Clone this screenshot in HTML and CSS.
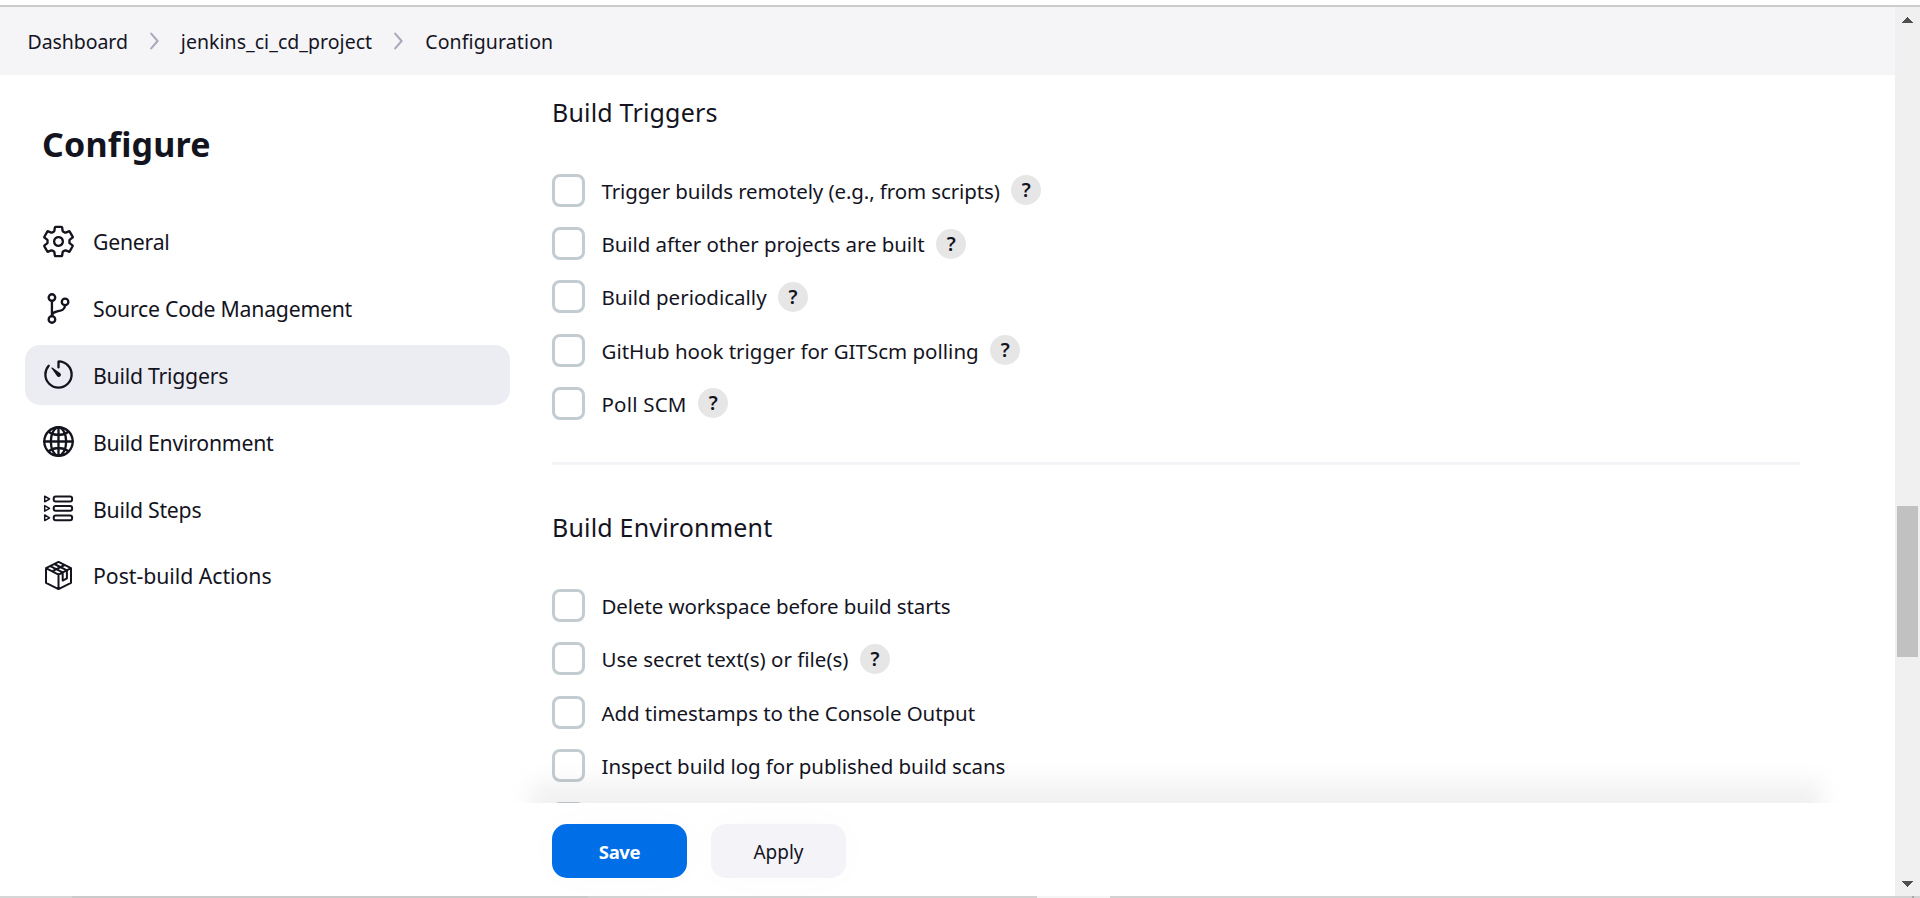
FILE: index.html
```html
<!DOCTYPE html>
<html lang="en">
<head>
<meta charset="utf-8">
<title>jenkins_ci_cd_project Config [Jenkins]</title>
<link rel="stylesheet" href="styles.css">
</head>
<body>
<div class="viewport">
  <div class="page">
    <nav class="breadcrumbs">
      <span>Dashboard</span>
      <svg class="chevron" viewBox="0 0 9 18"><path d="M1.2 1.6 7.6 9l-6.4 7.4"/></svg>
      <span class="project">jenkins_ci_cd_project</span>
      <svg class="chevron" viewBox="0 0 9 18"><path d="M1.2 1.6 7.6 9l-6.4 7.4"/></svg>
      <span class="loose">Configuration</span>
    </nav>
    <div class="work">
      <aside class="sidebar">
        <h1>Configure</h1>
        <ul class="tasks">
          <li class="task">
            <svg class="icon" viewBox="0 0 512 512"><path d="M262.29 192.31a64 64 0 1057.4 57.4 64.13 64.13 0 00-57.4-57.4zM416.39 256a154.34 154.34 0 01-1.53 20.79l45.21 35.46a10.81 10.81 0 012.45 13.75l-42.77 74a10.81 10.81 0 01-13.14 4.59l-44.9-18.08a16.11 16.11 0 00-15.17 1.75A164.48 164.48 0 01325 400.8a15.94 15.94 0 00-8.82 12.14l-6.73 47.89a11.08 11.08 0 01-10.68 9.17h-85.54a11.11 11.11 0 01-10.69-8.87l-6.72-47.82a16.07 16.07 0 00-9-12.22 155.3 155.3 0 01-21.46-12.57 16 16 0 00-15.11-1.71l-44.89 18.07a10.81 10.81 0 01-13.14-4.58l-42.77-74a10.8 10.8 0 012.45-13.75l38.21-30a16.05 16.05 0 006-14.08c-.36-4.17-.58-8.33-.58-12.5s.21-8.27.58-12.35a16 16 0 00-6.07-13.94l-38.19-30A10.81 10.81 0 0149.48 186l42.77-74a10.81 10.81 0 0113.14-4.59l44.9 18.08a16.11 16.11 0 0015.17-1.75A164.48 164.48 0 01187 111.2a15.94 15.94 0 008.82-12.14l6.73-47.89A11.08 11.08 0 01213.23 42h85.54a11.11 11.11 0 0110.69 8.87l6.72 47.82a16.07 16.07 0 009 12.22 155.3 155.3 0 0121.46 12.57 16 16 0 0015.11 1.71l44.89-18.07a10.81 10.81 0 0113.14 4.58l42.77 74a10.8 10.8 0 01-2.45 13.75l-38.21 30a16.05 16.05 0 00-6.05 14.08c.33 4.14.55 8.3.55 12.47z"/></svg>
            <span>General</span>
          </li>
          <li class="task">
            <svg class="icon" viewBox="0 0 512 512"><circle cx="160" cy="96" r="48"/><circle cx="160" cy="416" r="48"/><path d="M160 368V144"/><circle cx="352" cy="160" r="48"/><path d="M352 208c0 128-192 48-192 160"/></svg>
            <span>Source Code Management</span>
          </li>
          <li class="task active">
            <svg class="icon" viewBox="0 0 512 512"><path d="M112.91 128A191.85 191.85 0 0064 254c-1.18 106.35 85.65 193.8 192 194 106.2.2 192-85.83 192-192 0-104.54-83.55-189.61-187.5-192a4.36 4.36 0 00-4.5 4.37V152"/><path class="solid" d="M233.38 278.63l-79-113a8.13 8.13 0 0111.32-11.32l113 79a32.5 32.5 0 01-37.25 53.26 33.21 33.21 0 01-8.07-7.94z"/></svg>
            <span>Build Triggers</span>
          </li>
          <li class="task">
            <svg class="icon" viewBox="0 0 512 512"><path d="M256 48C141.13 48 48 141.13 48 256s93.13 208 208 208 208-93.13 208-208S370.87 48 256 48z"/><path d="M256 48c-58.07 0-112.67 93.13-112.67 208S197.93 464 256 464s112.67-93.13 112.67-208S314.07 48 256 48z"/><path d="M117.33 117.33c38.24 27.15 86.38 43.34 138.67 43.34s100.43-16.19 138.67-43.34M394.67 394.67c-38.24-27.15-86.38-43.34-138.67-43.34s-100.43 16.19-138.67 43.34M256 48v416M464 256H48"/></svg>
            <span>Build Environment</span>
          </li>
          <li class="task">
            <svg class="icon fine" viewBox="0 0 35 35"><rect x="12.7" y="5.6" width="18.4" height="4.8" rx="2"/><rect x="12.7" y="15" width="18.4" height="4.8" rx="2"/><rect x="12.7" y="24.4" width="18.4" height="4.8" rx="2"/><path class="thin" d="M3.7 5.2v5.6L8.5 8zM3.7 14.6v5.6l4.8-2.8zM3.7 24v5.6l4.8-2.8z"/></svg>
            <span>Build Steps</span>
          </li>
          <li class="task">
            <svg class="icon fine" viewBox="0 0 35 35"><path d="M17.5 3.9 30 10.2v14.6L17.5 31.1 5 24.8V10.2zM5 10.2l12.5 6.4L30 10.2M17.5 16.6V31M9.2 8.1l12.5 6.3v8.2l4.2-2.2v-8.1L13.4 6M11.1 13.3 23.6 7"/></svg>
            <span class="loose">Post-build Actions</span>
          </li>
        </ul>
      </aside>
      <main class="main">
        <section class="section">
          <h2>Build Triggers</h2>
          <div class="row"><i class="box"></i><label class="tight">Trigger builds remotely (e.g., from scripts)</label><b class="help">?</b></div>
          <div class="row"><i class="box"></i><label>Build after other projects are built</label><b class="help">?</b></div>
          <div class="row"><i class="box"></i><label class="even">Build periodically</label><b class="help">?</b></div>
          <div class="row"><i class="box"></i><label class="even">GitHub hook trigger for GITScm polling</label><b class="help">?</b></div>
          <div class="row"><i class="box"></i><label class="wide">Poll SCM</label><b class="help">?</b></div>
        </section>
        <section class="section">
          <h2>Build Environment</h2>
          <div class="row"><i class="box"></i><label class="tight">Delete workspace before build starts</label></div>
          <div class="row"><i class="box"></i><label class="even">Use secret text(s) or file(s)</label><b class="help">?</b></div>
          <div class="row"><i class="box"></i><label>Add timestamps to the Console Output</label></div>
          <div class="row"><i class="box"></i><label>Inspect build log for published build scans</label></div>
          <div class="row"><i class="box"></i></div>
        </section>
      </main>
      <div class="shade"><div class="shade-cast"></div></div>
      <footer class="actions">
        <button class="btn primary">Save</button>
        <button class="btn">Apply</button>
      </footer>
    </div>
  </div>
  <div class="scrollbar">
    <svg class="arrow" viewBox="0 0 11 6"><path d="M0 6 5.5 0 11 6z"/></svg>
    <div class="track"><div class="thumb"></div></div>
    <svg class="arrow" viewBox="0 0 11 6"><path d="M0 0h11L5.5 6z"/></svg>
  </div>
</div>
<div class="edge"></div>
</body>
</html>
```
FILE: styles.css
```css
* { box-sizing: border-box; }

body {
  margin: 0;
  height: 898px;
  padding-top: 5px;
  overflow: hidden;
  background: #fff;
  color: #14141f;
  font-family: "Noto Sans", "Open Sans", sans-serif;
}

.viewport {
  display: flex;
  height: 891px;
  border-top: 2px solid #ccc;
}

/* Strip of the taskbar visible under the window */
.edge {
  height: 2px;
  background: linear-gradient(90deg, #d6d6d6 72px, #cacaca 72px 588px, #d2d2d2 588px 1037px, #f5f5f5 1037px 1110px, #d2d2d2 1110px 1912px, #a8a8a8 1912px 1914px, #d2d2d2 1914px);
}

.page {
  flex: 1;
  display: flex;
  flex-direction: column;
  min-width: 0;
}

.breadcrumbs {
  display: flex;
  align-items: center;
  gap: 22px;
  height: 68px;
  padding-left: 27.6px;
  background: #f5f5f8;
  font-size: 19.5px;
}

.breadcrumbs span:first-child { letter-spacing: -0.08px; }
.breadcrumbs .project { letter-spacing: 0.04px; }
.breadcrumbs .loose { letter-spacing: 0.12px; }

.chevron {
  width: 9px;
  height: 18px;
  fill: none;
  stroke: #a9a9bb;
  stroke-width: 2.1;
  stroke-linecap: round;
  stroke-linejoin: round;
}

.work {
  flex: 1;
  position: relative;
  display: grid;
  grid-template-columns: 552px 1fr;
  grid-template-rows: 728px 1fr;
  min-height: 0;
}

.sidebar {
  grid-row: 1 / 3;
  padding: 44px 42px 0 25px;
}

h1 {
  margin: 0 0 42.4px 17px;
  font-size: 34px;
  line-height: 50px;
  letter-spacing: 0.2px;
  font-weight: 700;
}

.tasks {
  display: flex;
  flex-direction: column;
  gap: 6.8px;
  margin: 0;
  padding: 0;
  list-style: none;
}

.task {
  display: flex;
  align-items: center;
  gap: 17px;
  height: 60px;
  padding-left: 16px;
  border-radius: 15px;
  font-size: 21.25px;
  letter-spacing: -0.25px;
}

.task span { padding-top: 1px; }
.task .loose { letter-spacing: -0.04px; }
.task.active { background: #ecedf3; }

.icon {
  width: 35px;
  height: 35px;
  fill: none;
  stroke: #14141f;
  stroke-width: 34;
  stroke-linecap: round;
  stroke-linejoin: round;
}

.icon.fine { stroke-width: 2; }
.icon .thin { stroke-width: 1.5; }
.icon .solid { fill: #14141f; stroke: none; }

.main {
  overflow: hidden;
  padding-right: 95px;
}

.section {
  padding: 17px 0 31.9px;
  border-bottom: 3px solid #f3f3f8;
}

.section + .section { padding-top: 42.1px; }

h2 {
  margin: 0 0 31.85px;
  font-size: 25px;
  line-height: 40px;
  letter-spacing: 0.18px;
  font-weight: 400;
}

.row {
  display: flex;
  align-items: center;
  height: 53.25px;
}

.box {
  width: 33px;
  height: 33px;
  margin-right: 16.5px;
  border: 3px solid #c3ccd1;
  border-radius: 8px;
}

label {
  padding-top: 1px;
  font-size: 20.5px;
  letter-spacing: -0.07px;
}

label.tight { letter-spacing: -0.11px; }
label.even { letter-spacing: 0; }
label.wide { letter-spacing: 0.2px; }

.help {
  width: 30px;
  height: 30px;
  margin-left: 11.5px;
  border-radius: 50%;
  background: #e6e6e6;
  font-size: 19.5px;
  font-weight: 600;
  line-height: 30px;
  text-align: center;
}

/* Shadow the action bar casts over the form, clipped at the bar's top edge */
.shade {
  position: absolute;
  left: 490px;
  right: 30px;
  bottom: 93px;
  height: 60px;
  overflow: hidden;
  pointer-events: none;
}

.shade-cast {
  height: 120px;
  margin: 39px 43px 0 41px;
  background: rgba(0, 0, 0, 0.055);
  filter: blur(11px);
}

.actions {
  display: flex;
  align-items: flex-start;
  gap: 24px;
  padding-top: 21px;
  background: #fff;
}

.btn {
  width: 135px;
  height: 54px;
  padding: 2px 0 0;
  border: 0;
  border-radius: 15px;
  background: #f4f4f8;
  box-shadow: 0 0 40px rgba(0, 0, 0, 0.02);
  color: #14141f;
  font-family: inherit;
  font-size: 19px;
}

.btn.primary {
  padding-top: 1px;
  background: #006ee6;
  color: #fff;
  font-size: 18.5px;
  font-weight: 700;
  letter-spacing: -0.4px;
}

.scrollbar {
  display: flex;
  flex-direction: column;
  align-items: center;
  width: 25px;
  padding: 10px 0 9px;
  background: #f0f0f0;
}

.arrow {
  width: 11px;
  height: 6px;
  fill: #505050;
  shape-rendering: crispEdges;
}

.track { flex: 1; padding-top: 483px; }

.thumb {
  width: 21px;
  height: 151px;
  background: #c1c1c1;
}
```
